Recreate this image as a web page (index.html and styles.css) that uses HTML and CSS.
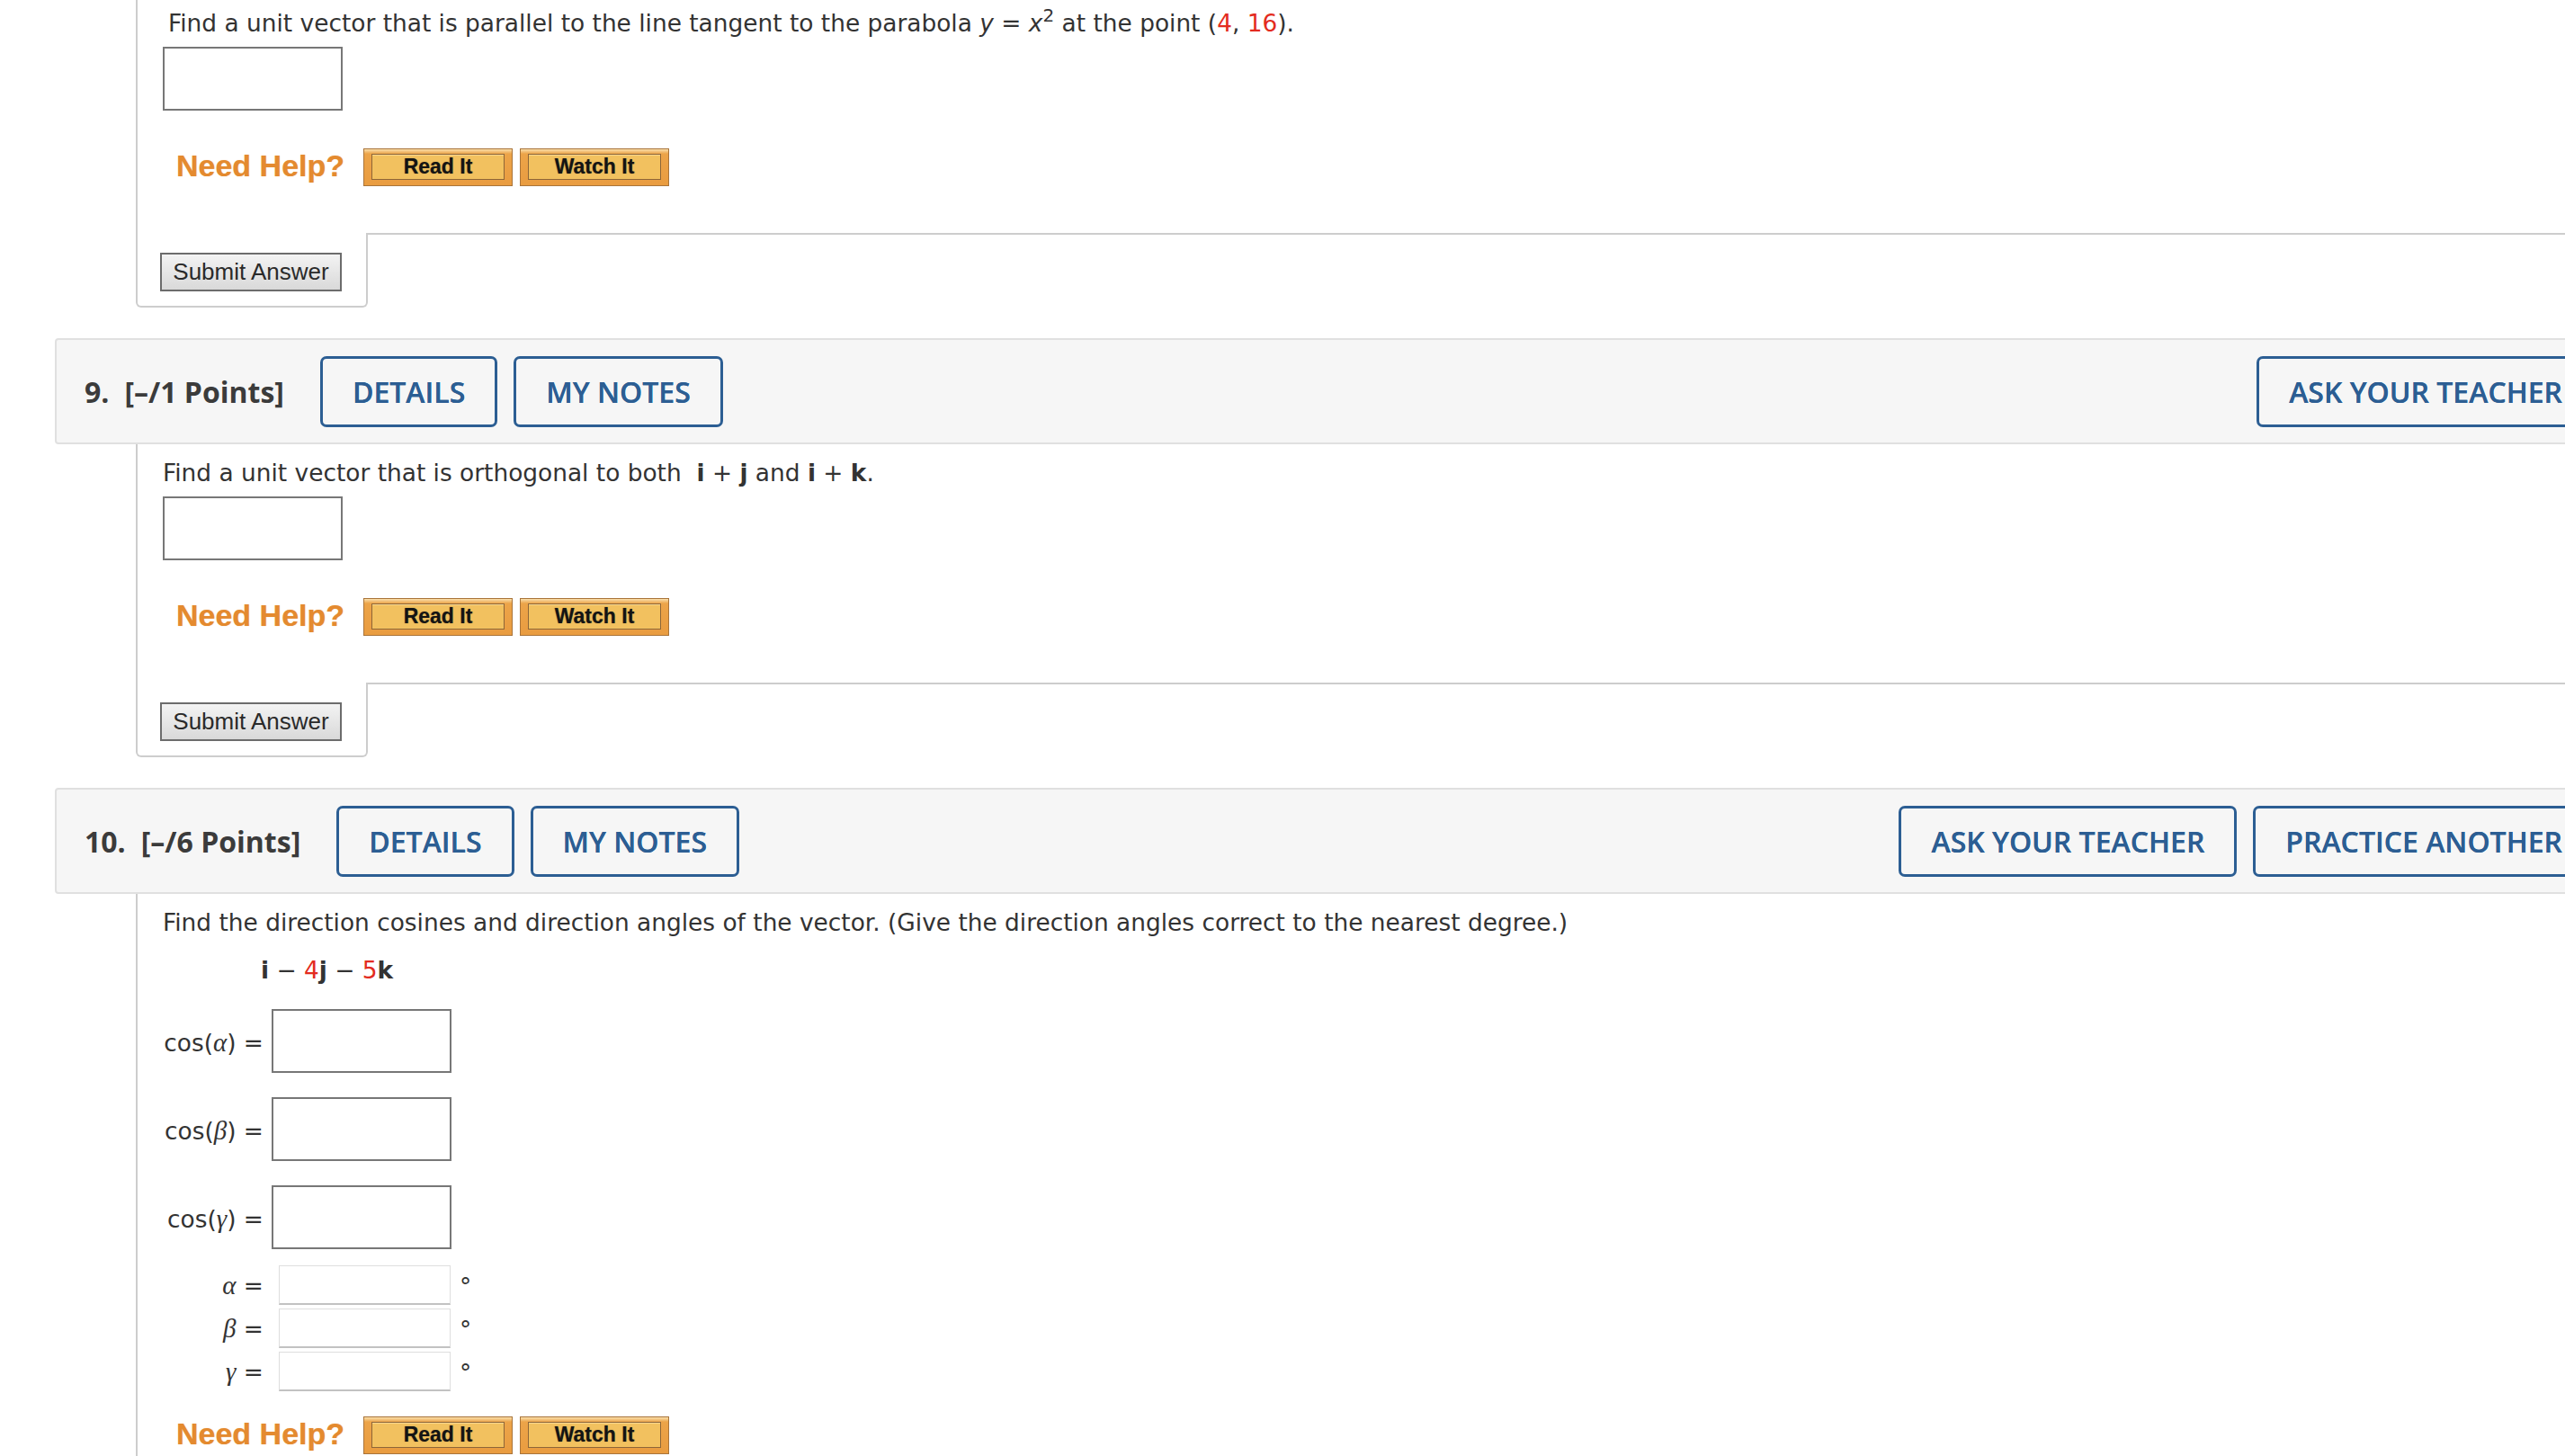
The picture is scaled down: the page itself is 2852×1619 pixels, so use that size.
FILE: index.html
```html
<!DOCTYPE html>
<html lang="en">
<head>
<meta charset="utf-8">
<title>Questions</title>
<link rel="stylesheet" href="styles.css">
</head>
<body>
<div class="page">

  <section class="q">
    <div class="qbody first">
      <p class="qtext indent">Find a unit vector that is parallel to the line tangent to the parabola <i>y</i> = <i>x</i><sup class="sup">2</sup> at the point (<span class="red">4</span>, <span class="red">16</span>).</p>
      <div class="ans"></div>
      <div class="help">
        <span class="needhelp">Need Help?</span>
        <span class="hbtn"><span>Read It</span></span>
        <span class="hbtn"><span>Watch It</span></span>
      </div>
    </div>
    <div class="qfoot">
      <div class="subcell"><div class="submit">Submit Answer</div></div>
      <div class="subrest"></div>
    </div>
  </section>

  <section class="q">
    <div class="qhead">
      <div class="qnum">9.<span class="pts">[–/1 Points]</span></div>
      <div class="lbtns">
        <span class="obtn">DETAILS</span>
        <span class="obtn">MY NOTES</span>
      </div>
      <div class="rbtns">
        <span class="obtn">ASK YOUR TEACHER</span>
      </div>
    </div>
    <div class="qbody">
      <p class="qtext">Find a unit vector that is orthogonal to both &nbsp;<b>i</b> + <b>j</b> and <b>i</b> + <b>k</b>.</p>
      <div class="ans"></div>
      <div class="help">
        <span class="needhelp">Need Help?</span>
        <span class="hbtn"><span>Read It</span></span>
        <span class="hbtn"><span>Watch It</span></span>
      </div>
    </div>
    <div class="qfoot">
      <div class="subcell"><div class="submit">Submit Answer</div></div>
      <div class="subrest"></div>
    </div>
  </section>

  <section class="q">
    <div class="qhead">
      <div class="qnum">10.<span class="pts">[–/6 Points]</span></div>
      <div class="lbtns">
        <span class="obtn">DETAILS</span>
        <span class="obtn">MY NOTES</span>
      </div>
      <div class="rbtns">
        <span class="obtn">ASK YOUR TEACHER</span>
        <span class="obtn">PRACTICE ANOTHER</span>
      </div>
    </div>
    <div class="qbody last">
      <p class="qtext">Find the direction cosines and direction angles of the vector. (Give the direction angles correct to the nearest degree.)</p>
      <p class="vec"><b>i</b> − <span class="red">4</span><b>j</b> − <span class="red">5</span><b>k</b></p>
      <div class="cosgrid">
        <div class="row cosrow"><span class="lbl">cos(<i class="gk">α</i>) =</span><div class="ans"></div></div>
        <div class="row cosrow"><span class="lbl">cos(<i class="gk">β</i>) =</span><div class="ans"></div></div>
        <div class="row cosrow"><span class="lbl">cos(<i class="gk">γ</i>) =</span><div class="ans"></div></div>
      </div>
      <div class="anggrid">
        <div class="row angrow"><span class="lbl"><i class="gk">α</i> =</span><div class="small"></div><span class="deg">°</span></div>
        <div class="row angrow"><span class="lbl"><i class="gk">β</i> =</span><div class="small"></div><span class="deg">°</span></div>
        <div class="row angrow"><span class="lbl"><i class="gk">γ</i> =</span><div class="small"></div><span class="deg">°</span></div>
      </div>
      <div class="help help10">
        <span class="needhelp">Need Help?</span>
        <span class="hbtn"><span>Read It</span></span>
        <span class="hbtn"><span>Watch It</span></span>
      </div>
    </div>
  </section>

</div>
</body>
</html>
```

FILE: styles.css
```css
html, body {
  margin: 0;
  height: 1619px;
  overflow: hidden;
  background: #ffffff;
}

body {
  font-family: "DejaVu Sans", Verdana, sans-serif;
  font-size: 26.4px;
  color: #333333;
}

.page {
  width: 2918px;
  padding-left: 61px;
  box-sizing: border-box;
}

.q + .q {
  margin-top: 34px;
}

/* header bar */
.qhead {
  display: flex;
  align-items: center;
  height: 118px;
  box-sizing: border-box;
  background: #f6f6f6;
  border: 2px solid #e0e0e0;
  border-radius: 4px;
  padding: 0 31px 0 31px;
}

.qnum {
  font-family: "Open Sans", sans-serif;
  font-weight: 700;
  font-size: 32px;
  color: #3b3b3b;
  white-space: nowrap;
}

.pts {
  margin-left: 17px;
}

.lbtns {
  display: flex;
  gap: 18px;
  margin-left: 40px;
}

.rbtns {
  display: flex;
  gap: 18px;
  margin-left: auto;
}

.obtn {
  display: block;
  height: 79px;
  box-sizing: border-box;
  border: 3px solid #2c5e93;
  border-radius: 7px;
  padding: 0 33px;
  font-family: "Open Sans", sans-serif;
  font-weight: 600;
  font-size: 32px;
  line-height: 73px;
  color: #2c5e93;
  white-space: nowrap;
  text-shadow: 0 0 0.6px #2c5e93;
}

/* question body */
.qbody {
  margin-left: 90px;
  border-left: 2px solid #cdcdcd;
  padding: 14px 0 52px 28px;
}

.qbody.first {
  padding-top: 8px;
}

.qbody.last {
  padding-bottom: 120px;
}

.qtext {
  margin: 0;
  line-height: 36px;
  white-space: nowrap;
}

.qtext.indent {
  padding-left: 6px;
}

.sup {
  font-size: 20px;
  line-height: 0;
  vertical-align: 11px;
}

.red {
  color: #e32b20;
}

.ans {
  width: 200px;
  height: 71px;
  box-sizing: border-box;
  border: 2px solid #777777;
  background: #ffffff;
  margin-top: 8px;
}

/* need help row */
.help {
  display: flex;
  align-items: center;
  height: 42px;
  margin-top: 42px;
}

.help10 {
  margin-top: 28px;
}

.needhelp {
  width: 208px;
  margin-left: 15px;
  margin-bottom: 4px;
  font-family: "Liberation Sans", Arial, sans-serif;
  font-weight: 700;
  font-size: 34px;
  line-height: 38px;
  color: #e48a2f;
  text-shadow: 0 0 1px rgba(228, 138, 47, 0.6);
  white-space: nowrap;
}

.hbtn {
  display: flex;
  width: 166px;
  height: 42px;
  box-sizing: border-box;
  border: 1px solid #a9743a;
  background: linear-gradient(#fadfab 0, #eca449 5px, #e99c40 100%);
  padding: 5px 8px 6px;
}

.hbtn + .hbtn {
  margin-left: 8px;
}

.hbtn span {
  flex: 1;
  border: 1px solid #8e6638;
  background: #f2c15f;
  box-shadow: inset 0 1px 0 #f8d78f;
  font-family: "Liberation Sans", Arial, sans-serif;
  font-weight: 700;
  font-size: 23px;
  line-height: 27px;
  text-align: center;
  color: #141414;
  text-shadow: 0 0 1px rgba(0, 0, 0, 0.5);
}

/* submit footer */
.qfoot {
  display: flex;
  margin-left: 90px;
}

.subcell {
  width: 258px;
  box-sizing: border-box;
  border: 2px solid #cdcdcd;
  border-top: 0;
  border-radius: 0 0 6px 6px;
  padding: 22px 0 16px 25px;
}

.subrest {
  flex: 1;
  border-top: 2px solid #cdcdcd;
}

.submit {
  width: 202px;
  height: 43px;
  box-sizing: border-box;
  border: 2px solid #6c6c6c;
  background: linear-gradient(#f3f3f3, #d9d9d9);
  font-family: "Liberation Sans", Arial, sans-serif;
  font-size: 26px;
  line-height: 39px;
  text-align: center;
  color: #2a2a2a;
  white-space: nowrap;
}

/* question 10 */
.vec {
  margin: 17px 0 0 109px;
  line-height: 36px;
}

.cosgrid {
  display: flex;
  flex-direction: column;
  gap: 27px;
  margin-top: 25px;
}

.anggrid {
  display: flex;
  flex-direction: column;
  gap: 4px;
  margin-top: 18px;
}

.row {
  display: flex;
  align-items: center;
}

.lbl {
  width: 112px;
  text-align: right;
  line-height: 36px;
  white-space: nowrap;
}

.cosrow .lbl {
  padding-top: 4px;
}

.cosrow .ans {
  margin: 0 0 0 9px;
}

.gk {
  font-family: "Liberation Serif", "DejaVu Serif", serif;
  font-style: italic;
  font-size: 29px;
}

.small {
  width: 191px;
  height: 44px;
  box-sizing: border-box;
  border: 1px solid #dedede;
  border-bottom: 2px solid #c2c2c2;
  margin-left: 17px;
  background: #ffffff;
}

.deg {
  align-self: flex-start;
  margin-left: 10px;
  padding-top: 6px;
  line-height: 36px;
}
```
